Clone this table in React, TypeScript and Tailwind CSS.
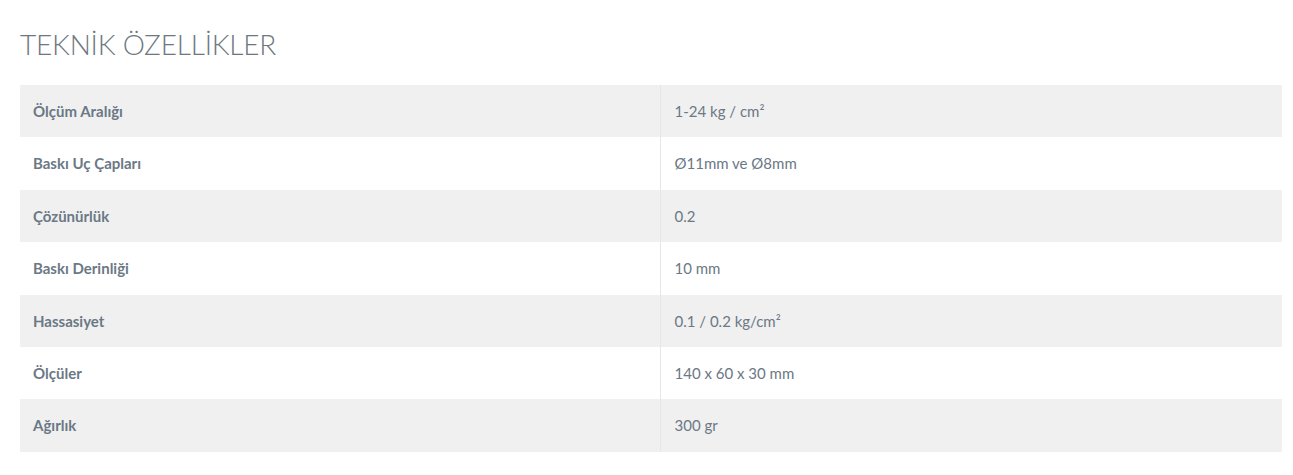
import React from "react";

type Spec = { label: string; value: React.ReactNode };

const specs: Spec[] = [
    { label: "Ölçüm Aralığı", value: "1-24 kg / cm²" },
    { label: "Baskı Uç Çapları", value: "Ø11mm ve Ø8mm" },
    { label: "Çözünürlük", value: "0.2" },
    { label: "Baskı Derinliği", value: "10 mm" },
    { label: "Hassasiyet", value: "0.1 / 0.2 kg/cm²" },
    { label: "Ölçüler", value: "140 x 60 x 30 mm" },
    { label: "Ağırlık", value: "300 gr" },
];

export default function App() {
    return (
        <div className="min-h-[475px] bg-white pl-5 pr-[11px] pt-[26px] font-['Lato','Open_Sans',sans-serif] text-[#6b7885]">
            <h2 className="text-[28px] font-light leading-[36px] tracking-[-0.2px] text-[#6e7780]">
                TEKNİK ÖZELLİKLER
            </h2>

            <table className="mt-[23px] w-full border-collapse text-[15px]">
                <tbody>
                    {specs.map((s, i) => (
                        <tr
                            key={s.label}
                            className={i % 2 === 0 ? "bg-[#f0f0f0]" : "bg-white"}
                        >
                            <td className="h-[52.4px] w-[640px] border-r border-[#e6e6e6] pl-[13px] font-bold">
                                {s.label}
                            </td>
                            <td className="h-[52.4px] pl-[14px]">{s.value}</td>
                        </tr>
                    ))}
                </tbody>
            </table>
        </div>
    );
}
